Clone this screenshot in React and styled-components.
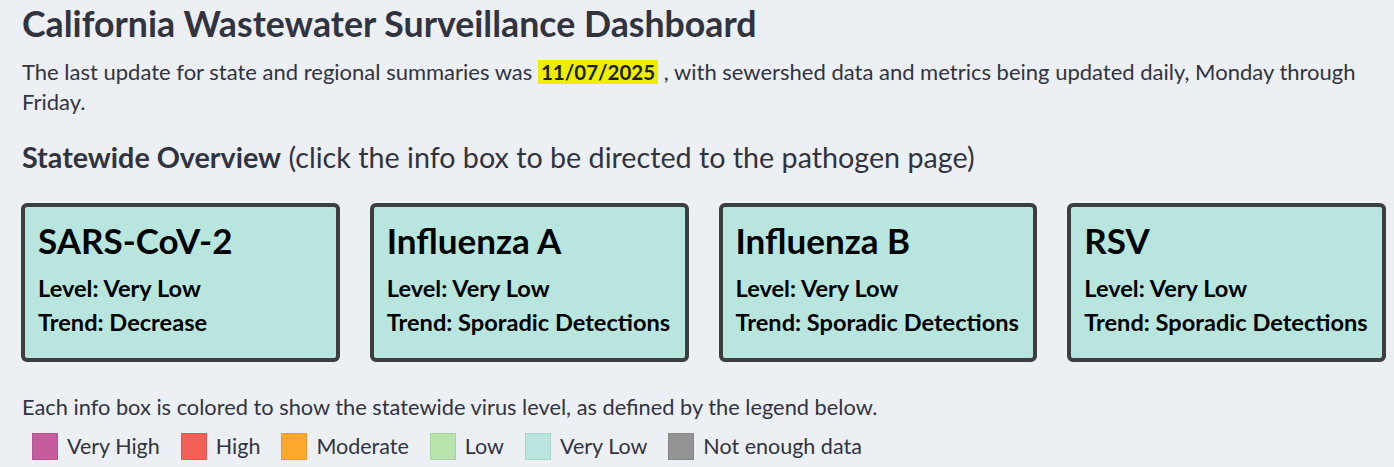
import React from "react";
import styled, { createGlobalStyle } from "styled-components";

const GlobalStyle = createGlobalStyle`
  body {
    margin: 0;
    background: #eceff4;
    font-family: Lato, "Liberation Sans", sans-serif;
    color: #31333f;
  }
`;

const Page = styled.div`
  padding: 2px 8px 0 22px;
`;

const Title = styled.h1`
  margin: 0;
  font-size: 35.7px;
  font-weight: 700;
  line-height: 44px;
  color: #31333f;
`;

const Intro = styled.p`
  margin: 11px 0 0;
  font-size: 22px;
  line-height: 30px;
`;

const Highlight = styled.b`
  display: inline-block;
  background: #eeee00;
  padding: 0 3px;
  font-size: 20.5px;
  line-height: 24px;
  color: #1e1e1e;
`;

const Overview = styled.h2`
  margin: 22px 0 0;
  font-size: 28.7px;
  line-height: 36px;
  font-weight: 400;
  b {
    font-weight: 700;
  }
`;

const Cards = styled.div`
  display: flex;
  gap: 30px;
  margin: 28px 0 0 -1px;
`;

const Card = styled.div`
  box-sizing: border-box;
  width: 319px;
  height: 159px;
  background: ${(p) => p.$bg};
  border: 4px solid #3d3e42;
  border-radius: 6px;
  padding: 10px 13px;
  color: #000;
`;

const CardTitle = styled.div`
  font-size: 35px;
  font-weight: 700;
  line-height: 46px;
`;

const CardLine = styled.div`
  font-size: 23.6px;
  font-weight: 700;
  line-height: 34px;
  margin-top: ${(p) => p.$mt || 0}px;
`;

const Note = styled.p`
  margin: 30px 0 0;
  font-size: 21.8px;
  line-height: 30px;
`;

const Legend = styled.div`
  display: flex;
  align-items: center;
  gap: 21px;
  margin: 11px 0 0 10px;
`;

const LegendItem = styled.div`
  display: flex;
  align-items: center;
  gap: 9px;
  font-size: 21.5px;
  line-height: 27px;
`;

const Swatch = styled.span`
  box-sizing: border-box;
  width: 26px;
  height: 27px;
  background: ${(p) => p.$c};
  border: 1px solid rgba(0, 0, 0, 0.08);
`;

const pathogens = [
  { name: "SARS-CoV-2", level: "Very Low", trend: "Decrease" },
  { name: "Influenza A", level: "Very Low", trend: "Sporadic Detections" },
  { name: "Influenza B", level: "Very Low", trend: "Sporadic Detections" },
  { name: "RSV", level: "Very Low", trend: "Sporadic Detections" },
];

const legend = [
  ["Very High", "#c55c9e"],
  ["High", "#f45f56"],
  ["Moderate", "#fea82f"],
  ["Low", "#b8e4ab"],
  ["Very Low", "#b8e6de"],
  ["Not enough data", "#949494"],
];

export default function App() {
  return (
    <Page>
      <GlobalStyle />
      <Title>California Wastewater Surveillance Dashboard</Title>
      <Intro>
        The last update for state and regional summaries was{" "}
        <Highlight>11/07/2025</Highlight> , with sewershed data and metrics
        being updated daily, Monday through Friday.
      </Intro>
      <Overview>
        <b>Statewide Overview</b> (click the info box to be directed to the
        pathogen page)
      </Overview>
      <Cards>
        {pathogens.map((p) => (
          <Card key={p.name} $bg="#b8e6de">
            <CardTitle>{p.name}</CardTitle>
            <CardLine $mt={8}>Level: {p.level}</CardLine>
            <CardLine>Trend: {p.trend}</CardLine>
          </Card>
        ))}
      </Cards>
      <Note>
        Each info box is colored to show the statewide virus level, as defined
        by the legend below.
      </Note>
      <Legend>
        {legend.map(([label, c]) => (
          <LegendItem key={label}>
            <Swatch $c={c} />
            {label}
          </LegendItem>
        ))}
      </Legend>
    </Page>
  );
}
